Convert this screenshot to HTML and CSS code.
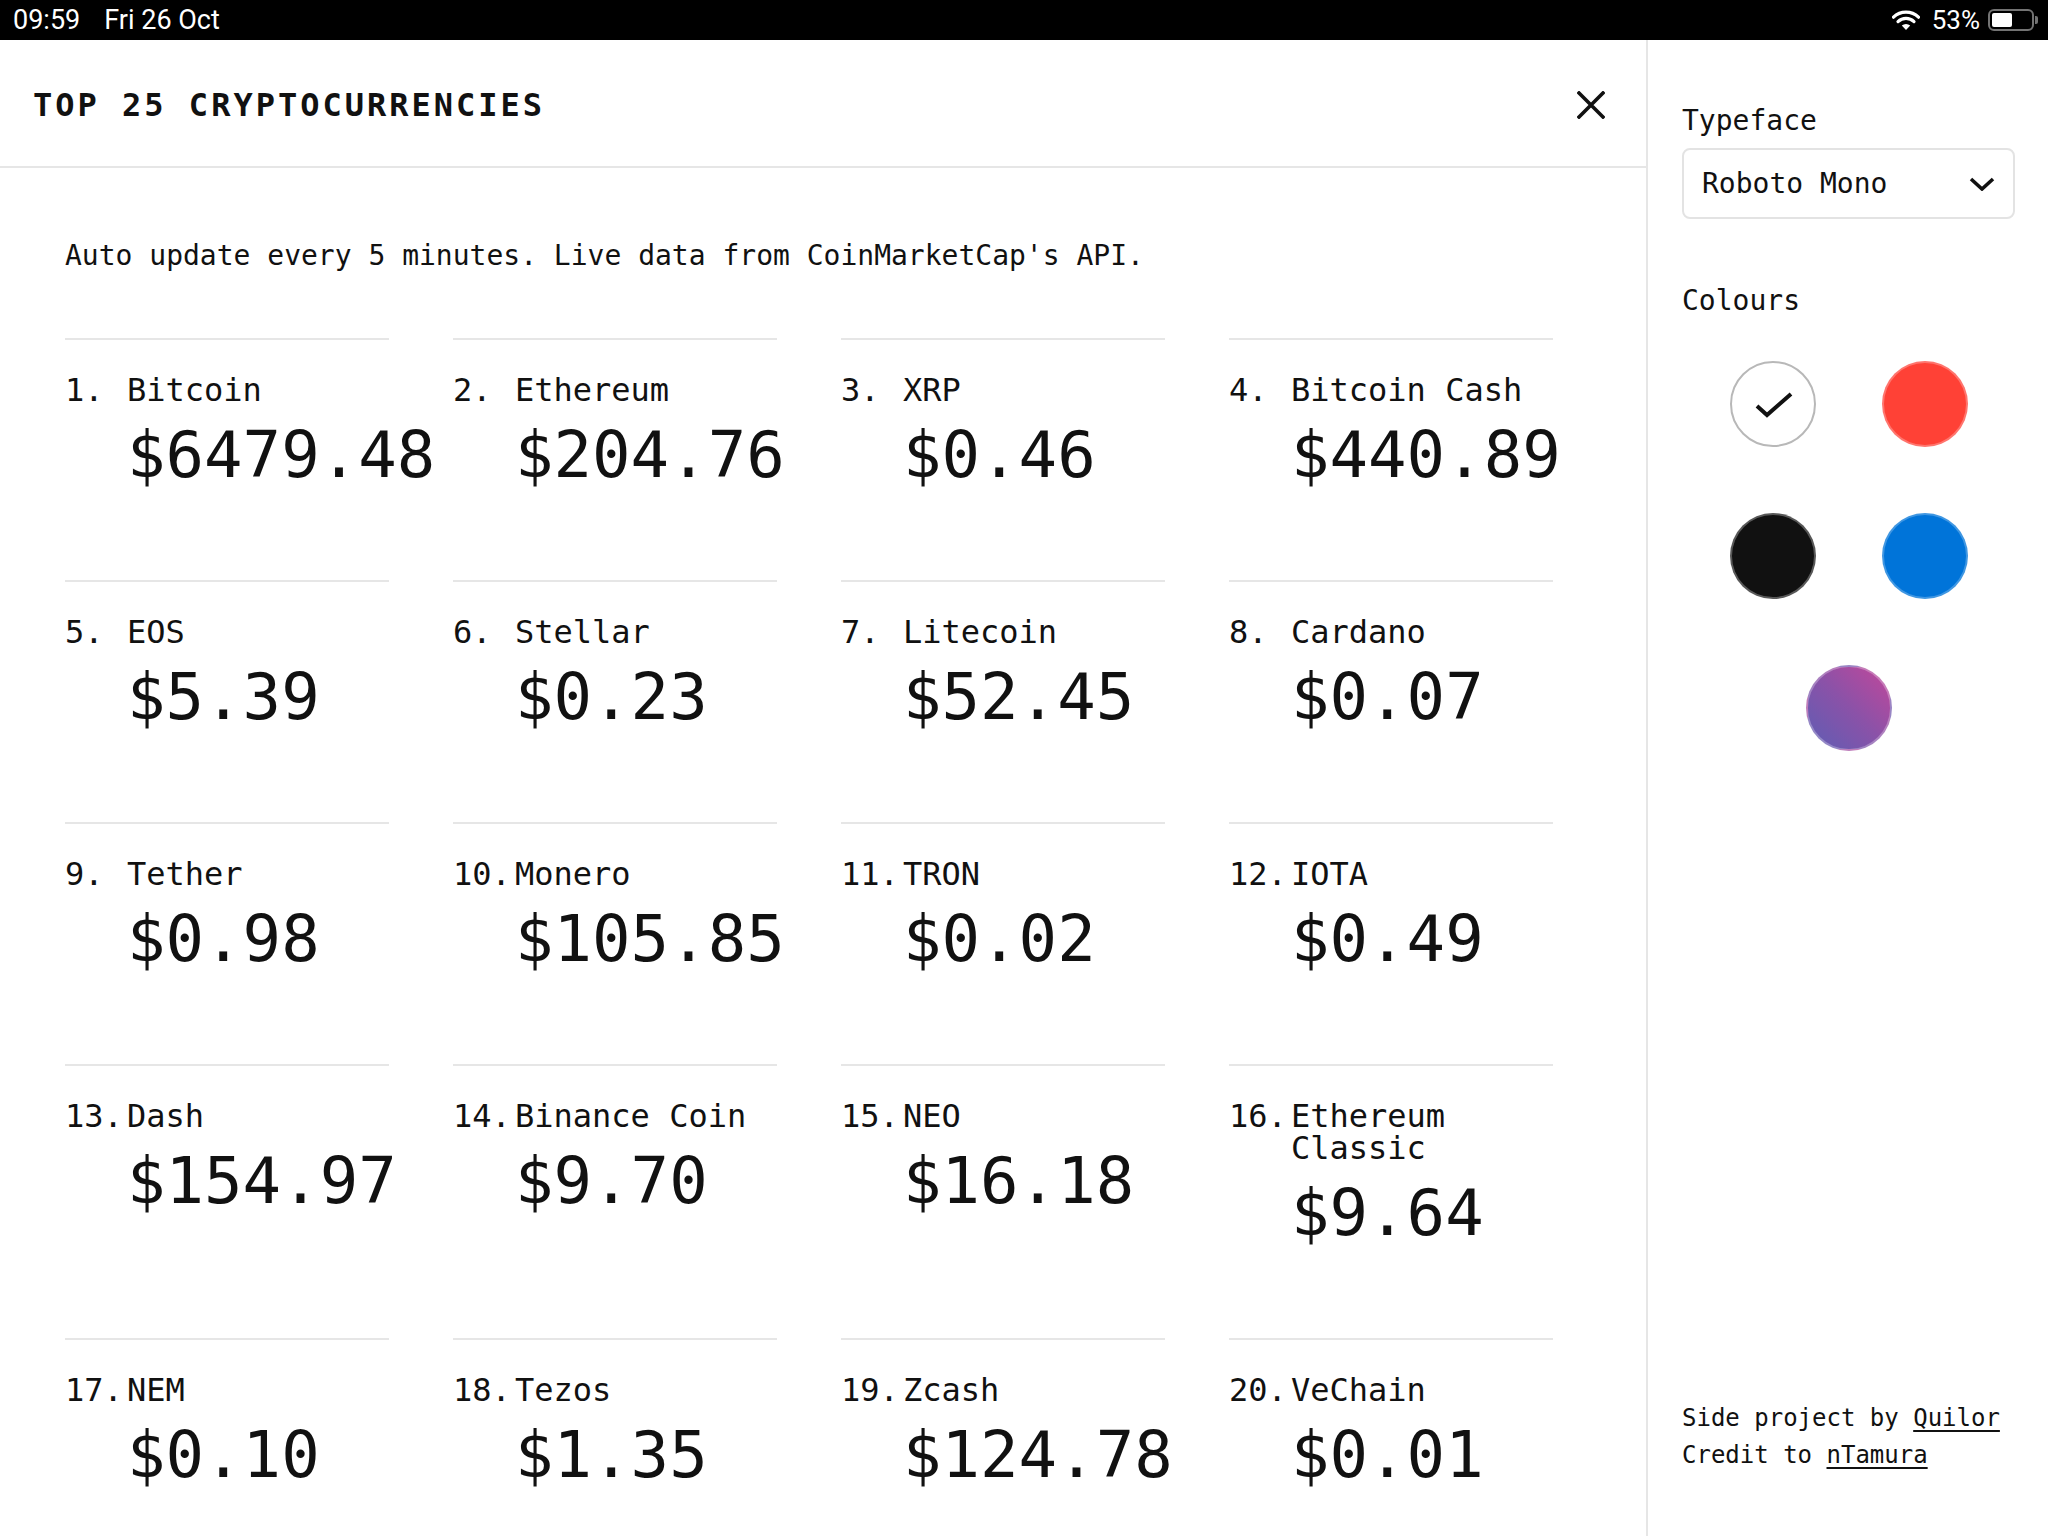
FILE: index.html
```html
<!DOCTYPE html>
<html lang="en">
<head>
<meta charset="utf-8">
<title>Top 25 Cryptocurrencies</title>
<link rel="stylesheet" href="styles.css">
</head>
<body>
<div class="statusbar">
  <div class="sb-left"><span class="sb-time">09:59</span><span class="sb-date">Fri 26 Oct</span></div>
  <div class="sb-right">
    <svg class="wifi" width="28" height="21" viewBox="0 0 28 21">
      <path d="M1.5 7.2 A18 18 0 0 1 26.5 7.2" fill="none" stroke="#fff" stroke-width="3.2" stroke-linecap="round"/>
      <path d="M6 11.6 A11.5 11.5 0 0 1 22 11.6" fill="none" stroke="#fff" stroke-width="3.2" stroke-linecap="round"/>
      <path d="M14 20 L9.8 15.6 A6 6 0 0 1 18.2 15.6 Z" fill="#fff"/>
    </svg>
    <span class="sb-pct">53%</span>
    <span class="battery"><span class="battery-fill"></span></span><span class="battery-nub"></span>
  </div>
</div>

<div class="app">
  <main class="main">
    <header class="header">
      <h1 class="title">TOP 25 CRYPTOCURRENCIES</h1>
      <svg class="close" width="28" height="28" viewBox="0 0 28 28">
        <path d="M2 2 L26 26 M26 2 L2 26" stroke="#111" stroke-width="3.6" stroke-linecap="square"/>
      </svg>
    </header>
    <div class="content">
      <p class="desc">Auto update every 5 minutes. Live data from CoinMarketCap's API.</p>
      <div class="grid">
        <div class="coin"><div class="name"><span class="num">1.</span><span class="label">Bitcoin</span></div><div class="price">$6479.48</div></div>
        <div class="coin"><div class="name"><span class="num">2.</span><span class="label">Ethereum</span></div><div class="price">$204.76</div></div>
        <div class="coin"><div class="name"><span class="num">3.</span><span class="label">XRP</span></div><div class="price">$0.46</div></div>
        <div class="coin"><div class="name"><span class="num">4.</span><span class="label">Bitcoin Cash</span></div><div class="price">$440.89</div></div>
        <div class="coin"><div class="name"><span class="num">5.</span><span class="label">EOS</span></div><div class="price">$5.39</div></div>
        <div class="coin"><div class="name"><span class="num">6.</span><span class="label">Stellar</span></div><div class="price">$0.23</div></div>
        <div class="coin"><div class="name"><span class="num">7.</span><span class="label">Litecoin</span></div><div class="price">$52.45</div></div>
        <div class="coin"><div class="name"><span class="num">8.</span><span class="label">Cardano</span></div><div class="price">$0.07</div></div>
        <div class="coin"><div class="name"><span class="num">9.</span><span class="label">Tether</span></div><div class="price">$0.98</div></div>
        <div class="coin"><div class="name"><span class="num">10.</span><span class="label">Monero</span></div><div class="price">$105.85</div></div>
        <div class="coin"><div class="name"><span class="num">11.</span><span class="label">TRON</span></div><div class="price">$0.02</div></div>
        <div class="coin"><div class="name"><span class="num">12.</span><span class="label">IOTA</span></div><div class="price">$0.49</div></div>
        <div class="coin"><div class="name"><span class="num">13.</span><span class="label">Dash</span></div><div class="price">$154.97</div></div>
        <div class="coin"><div class="name"><span class="num">14.</span><span class="label">Binance Coin</span></div><div class="price">$9.70</div></div>
        <div class="coin"><div class="name"><span class="num">15.</span><span class="label">NEO</span></div><div class="price">$16.18</div></div>
        <div class="coin"><div class="name"><span class="num">16.</span><span class="label">Ethereum Classic</span></div><div class="price">$9.64</div></div>
        <div class="coin"><div class="name"><span class="num">17.</span><span class="label">NEM</span></div><div class="price">$0.10</div></div>
        <div class="coin"><div class="name"><span class="num">18.</span><span class="label">Tezos</span></div><div class="price">$1.35</div></div>
        <div class="coin"><div class="name"><span class="num">19.</span><span class="label">Zcash</span></div><div class="price">$124.78</div></div>
        <div class="coin"><div class="name"><span class="num">20.</span><span class="label">VeChain</span></div><div class="price">$0.01</div></div>
      </div>
    </div>
  </main>

  <aside class="sidebar">
    <div class="field-label">Typeface</div>
    <div class="select">
      <span>Roboto Mono</span>
      <svg class="chev" width="26" height="14" viewBox="0 0 26 14">
        <path d="M2 2 L13 12 L24 2" fill="none" stroke="#111" stroke-width="3.6"/>
      </svg>
    </div>
    <div class="field-label colours-label">Colours</div>
    <div class="swatches">
      <div class="swatch swatch-white">
        <svg width="86" height="86" viewBox="0 0 86 86" class="check">
          <path d="M27 45 L37 54 L61 33" fill="none" stroke="#111" stroke-width="4"/>
        </svg>
      </div>
      <div class="swatch swatch-red"></div>
      <div class="swatch swatch-black"></div>
      <div class="swatch swatch-blue"></div>
      <div class="swatch swatch-grad"></div>
    </div>
    <div class="credits">
      <div>Side project by <a href="#">Quilor</a></div>
      <div>Credit to <a href="#">nTamura</a></div>
    </div>
  </aside>
</div>
</body>
</html>
```

FILE: styles.css
```css
* { box-sizing: border-box; }

html, body {
  margin: 0;
  padding: 0;
}

body {
  width: 2048px;
  height: 1536px;
  overflow: hidden;
  background: #fff;
  color: #111;
  font-family: "DejaVu Sans Mono", "Liberation Mono", monospace;
}

/* status bar */
.statusbar {
  height: 40px;
  background: #000;
  color: #fff;
  display: flex;
  align-items: center;
  justify-content: space-between;
  padding: 0 10px 0 13px;
  font-family: Roboto, "Liberation Sans", sans-serif;
  font-size: 27px;
}
.sb-left { display: flex; gap: 24px; }
.sb-right { display: flex; align-items: center; }
.wifi { margin-right: 12px; }
.sb-pct { margin-right: 8px; font-size: 26px; }
.battery {
  width: 46px;
  height: 22px;
  border: 2px solid rgba(255,255,255,0.45);
  border-radius: 6px;
  padding: 2px;
  display: flex;
}
.battery-fill {
  width: 53%;
  height: 100%;
  background: #fff;
  border-radius: 2px;
}
.battery-nub {
  width: 3px;
  height: 8px;
  background: rgba(255,255,255,0.45);
  border-radius: 0 2px 2px 0;
  margin-left: 1px;
}

/* layout */
.app {
  display: flex;
  height: 1496px;
}

.main {
  width: 1648px;
  border-right: 2px solid #e6e6e6;
  overflow: hidden;
}

.header {
  height: 128px;
  border-bottom: 2px solid #e6e6e6;
  display: flex;
  align-items: center;
  justify-content: space-between;
  padding: 3px 41px 0 33px;
}

.title {
  margin: 0;
  font-size: 32px;
  font-weight: bold;
  letter-spacing: 3px;
  line-height: 1;
}

.content {
  padding: 0 0 0 65px;
}

.desc {
  margin: 68px 0 62px;
  font-size: 28px;
  line-height: 40px;
}

.grid {
  display: grid;
  grid-template-columns: repeat(4, 324px);
  column-gap: 64px;
}

.coin {
  border-top: 2px solid #e6e6e6;
  padding: 34px 0 93px;
}

.name {
  display: flex;
  font-size: 32px;
  line-height: 32px;
}

.num {
  flex: 0 0 62px;
}

.label {
  flex: 1;
}

.price {
  margin: 17px 0 0 62px;
  font-size: 64px;
  line-height: 64px;
  white-space: nowrap;
}

/* sidebar */
.sidebar {
  width: 400px;
  display: flex;
  flex-direction: column;
  padding: 64px 33px 62px 34px;
}

.field-label {
  font-size: 28px;
  line-height: 34px;
}

.select {
  margin-top: 10px;
  height: 71px;
  border: 2px solid #e3e3e3;
  border-radius: 8px;
  display: flex;
  align-items: center;
  justify-content: space-between;
  padding: 0 18px 0 18px;
  font-size: 28px;
}

.colours-label {
  margin-top: 65px;
}

.swatches {
  margin-top: 43px;
  display: flex;
  flex-wrap: wrap;
  justify-content: center;
  gap: 66px;
}

.swatch {
  width: 86px;
  height: 86px;
  border-radius: 50%;
  border: 2px solid rgba(255,255,255,0.28);
  position: relative;
}

.swatch-white {
  background: #fff;
  border-color: #b8b8b8;
}
.check {
  position: absolute;
  left: -2px;
  top: -2px;
}
.swatch-red { background: #ff4136; }
.swatch-black { background: #111; border-color: rgba(255,255,255,0.3); }
.swatch-blue { background: #0074d9; border-color: rgba(255,255,255,0.25); }
.swatch-grad {
  background: linear-gradient(to top right, #5e5db4, #8a52a8 50%, #c2479a);
}

.credits {
  margin-top: auto;
  font-size: 24px;
  line-height: 37px;
}

.credits a {
  color: #111;
  text-decoration: underline;
  text-underline-offset: 4px;
}
```
